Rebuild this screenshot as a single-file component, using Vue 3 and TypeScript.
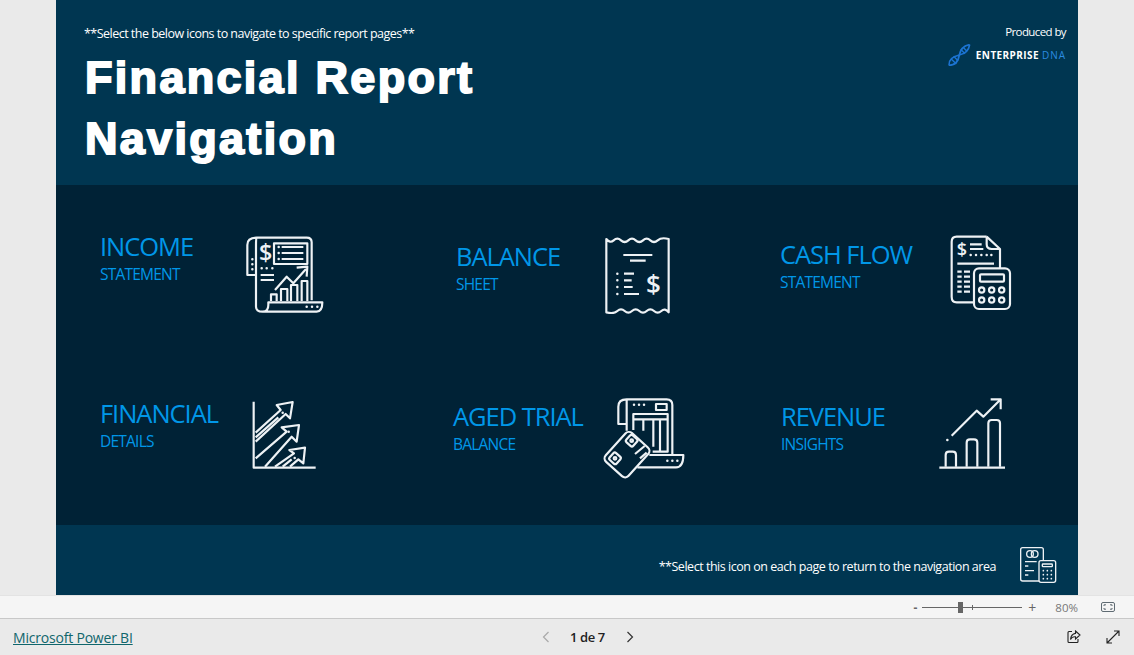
<script setup lang="ts">
const dollarFont = 'Open Sans'
</script>

<template>
  <div class="viewer">
    <div class="stage">
      <div class="report">
        <header class="report-header">
          <div class="intro">
            <p class="hint">**Select the below icons to navigate to specific report pages**</p>
            <h1 class="title">Financial Report<br />Navigation</h1>
          </div>
          <div class="producer">
            <span class="produced">Produced by</span>
            <div class="brand">
              <svg class="dna" viewBox="72 102 72 66" width="24" height="22" fill="none" stroke="#1c74d2">
                <path d="M78 166 Q104 166 109 135 Q114 108 140 104" stroke-width="5" />
                <path d="M78 166 Q76 142 109 135 Q136 130 140 104" stroke-width="5" />
                <path d="M84 146 L100 162 M92 139 L105 152 M113 118 L126 131 M120 112 L132 124" stroke-width="4" />
              </svg>
              <span class="brand-name">ENTERPRISE</span>
              <span class="brand-dna">DNA</span>
            </div>
          </div>
        </header>

        <nav class="tiles">
          <a class="tile tile-income">
            <div class="tile-text">
              <div class="tile-title">INCOME</div>
              <div class="tile-sub">STATEMENT</div>
            </div>
            <svg class="icon" viewBox="465 30 240 240" width="80" height="80">
              <path d="M500 38 H650 Q665 38 665 52 V226 M500 38 Q472 38 472 60 V150 H498 M500 38 Q498 40 498 60 V245 Q498 260 518 260 H680 Q697 260 697 232 H535 V240 Q535 260 518 260" />
              <rect x="552" y="55" width="100" height="62" />
              <path d="M575 66 H640 M575 84 H640 M575 102 H640 M512 150 H552 M512 165 H552" />
              <path class="dots" d="M566 66 H566.1 M566 84 H566.1 M566 102 H566.1 M487 103 H487.1 M487 118 H487.1 M487 133 H487.1 M515 130 H515.1 M530 130 H530.1 M547 130 H547.1 M650 245 H650.1 M666 245 H666.1 M682 245 H682.1" />
              <text class="dollar" x="527" y="109" font-size="70" :font-family="dollarFont">$</text>
              <path d="M555 195 L590 155 L610 175 L648 132 M620 128 L652 125 L650 155" />
              <path d="M543 228 V208 H560 V228 M573 228 V192 H592 V228 M603 228 V180 H622 V228 M635 228 V168 H652 V228" />
            </svg>
          </a>

          <a class="tile tile-balance">
            <div class="tile-text">
              <div class="tile-title">BALANCE</div>
              <div class="tile-sub">SHEET</div>
            </div>
            <svg class="icon" viewBox="489 33 204 234" width="68" height="78">
              <path d="M499 42 Q510 56 521 46 T543 46 T565 46 T587 46 T609 46 T631 46 T653 46 T686 42 V262 Q675 248 664 258 T642 258 T620 258 T598 258 T576 258 T554 258 T532 258 T499 262 Z" />
              <path d="M550 90 H637 M570 107 H617 M552 146 H582 M552 166 H575 M552 186 H578 M552 207 H597" />
              <path class="dots" d="M532 146 H532.1 M532 166 H532.1 M532 186 H532.1 M532 207 H532.1" />
              <text class="dollar" x="640" y="205" font-size="78" :font-family="dollarFont">$</text>
            </svg>
          </a>

          <a class="tile tile-cash">
            <div class="tile-text">
              <div class="tile-title">CASH FLOW</div>
              <div class="tile-sub">STATEMENT</div>
            </div>
            <svg class="icon" viewBox="540 27 186 231" width="62" height="77">
              <path d="M650 35 H560 Q545 35 545 50 V215 Q545 232 560 232 H612 M650 35 L690 72 V130 M650 35 V58 Q650 72 665 72 H690" />
              <text class="dollar" x="576" y="93" font-size="54" :font-family="dollarFont">$</text>
              <path d="M600 58 H635 M600 72 H640 M562 116 H672" />
              <path class="dots" d="M602 90 H602.1 M618 90 H618.1 M634 90 H634.1 M650 90 H650.1 M664 90 H664.1" />
              <path d="M562 140 H575 M582 140 H600 M562 155 H575 M582 155 H600 M562 170 H575 M582 170 H600 M562 185 H575 M582 185 H600 M562 200 H575 M582 200 H600" />
              <rect x="612" y="130" width="108" height="122" rx="15" />
              <rect x="630" y="148" width="72" height="22" rx="3" />
              <circle cx="635" cy="195" r="8" />
              <circle cx="665" cy="195" r="8" />
              <circle cx="695" cy="195" r="8" />
              <circle cx="635" cy="225" r="8" />
              <circle cx="665" cy="225" r="8" />
              <circle cx="695" cy="225" r="8" />
            </svg>
          </a>

          <a class="tile tile-details">
            <div class="tile-text">
              <div class="tile-title">FINANCIAL</div>
              <div class="tile-sub">DETAILS</div>
            </div>
            <svg class="icon" viewBox="486 30 198 210" width="66" height="70">
              <path d="M491 35 V233 H677" />
              <path d="M497 128 L572 60 L560 45 L608 36 L600 85 L587 72 L497 155 M497 142 L565 82" />
              <path d="M497 205 L590 125 L575 112 L627 105 L620 155 L605 140 L525 230" />
              <path d="M555 230 L612 190 L598 180 L645 173 L640 220 L625 208 L600 230 M578 230 L605 208" />
              <path class="dots" d="M578 68 H578.1 M596 125 H596.1 M614 204 H614.1" />
            </svg>
          </a>

          <a class="tile tile-trial">
            <div class="tile-text">
              <div class="tile-title">AGED TRIAL</div>
              <div class="tile-sub">BALANCE</div>
            </div>
            <svg class="icon" viewBox="489 21 246 246" width="82" height="82">
              <path d="M560 28 H680 Q697 28 697 45 V192 M560 28 Q535 28 535 50 V102 H560 M560 28 Q560 40 560 60 V122" />
              <path d="M580 120 V72 H683 V185 H638 M580 88 H683 M610 88 V122 M640 88 V170 M660 88 V185" />
              <rect x="648" y="42" width="32" height="18" />
              <path class="dots" d="M582 44 H582.1 M597 44 H597.1 M612 44 H612.1 M682 212 H682.1 M697 212 H697.1 M712 212 H712.1" />
              <path d="M628 195 H730 Q730 232 708 232 H592" />
              <rect x="-58" y="-46" width="116" height="92" rx="14" transform="translate(561 194) rotate(-48)" />
              <rect x="-14" y="-14" width="28" height="28" rx="6" transform="translate(575 152) rotate(-48)" />
              <rect x="-14" y="-14" width="28" height="28" rx="6" transform="translate(525 205) rotate(-48)" />
              <circle cx="575" cy="152" r="4" />
              <circle cx="525" cy="205" r="4" />
              <path d="M585 192 L614 168 M600 205 L620 188" />
            </svg>
          </a>

          <a class="tile tile-revenue">
            <div class="tile-text">
              <div class="tile-title">REVENUE</div>
              <div class="tile-sub">INSIGHTS</div>
            </div>
            <svg class="icon" viewBox="504 24 204 213" width="68" height="71">
              <path d="M508 233 H705" />
              <path d="M527 230 V195 Q527 185 537 185 H548 Q558 185 558 195 V230 M590 230 V158 Q590 148 600 148 H612 Q622 148 622 158 V230 M655 230 V100 Q655 90 665 90 H680 Q690 90 690 100 V230" />
              <path d="M545 137 L620 62 L640 80 L690 30 M662 28 H692 V58" />
              <path class="dots" d="M532 150 H532.1" />
            </svg>
          </a>
        </nav>

        <footer class="report-footer">
          <span class="return-note">**Select this icon on each page to return to the navigation area</span>
          <svg class="icon home-icon" viewBox="1137 78 114 114" width="38" height="38">
            <path d="M1197 183 H1148 Q1142 183 1142 177 V89 Q1142 83 1148 83 H1204 Q1210 83 1210 89 V122" />
            <circle cx="1170" cy="102" r="10" />
            <circle cx="1184" cy="102" r="10" />
            <path d="M1155 125 H1190 M1155 138 H1165 M1155 152 H1182 M1155 165 H1165" />
            <rect x="1197" y="122" width="50" height="65" rx="6" />
            <rect x="1207" y="132" width="30" height="8" rx="2" />
            <path class="dots" d="M1210 152 H1210.1 M1222 152 H1222.1 M1234 152 H1234.1 M1210 164 H1210.1 M1222 164 H1222.1 M1234 164 H1234.1 M1210 176 H1210.1 M1222 176 H1222.1 M1234 176 H1234.1" />
          </svg>
        </footer>
      </div>
    </div>

    <div class="zoom-bar">
      <span class="zoom-minus">-</span>
      <div class="zoom-track">
        <span class="zoom-tick"></span>
        <span class="zoom-thumb"></span>
      </div>
      <span class="zoom-plus">+</span>
      <span class="zoom-value">80%</span>
      <svg class="fit-icon" viewBox="0 0 16 12" width="16" height="12" fill="none" stroke="#5f6b73">
        <rect x="1.5" y="1.5" width="13" height="9" rx="1.5" />
        <path d="M4 5 V3.8 H6 M12 5 V3.8 H10 M4 7 V8.2 H6 M12 7 V8.2 H10" />
      </svg>
    </div>

    <div class="bottom-bar">
      <a class="pbi-link">Microsoft Power BI</a>
      <div class="pager">
        <svg viewBox="0 0 8 12" width="8" height="12" fill="none" stroke="#a9a9a9" stroke-width="1.2">
          <path d="M6.5 1 L1.5 6 L6.5 11" />
        </svg>
        <span class="page-label">1 de 7</span>
        <svg viewBox="0 0 8 12" width="8" height="12" fill="none" stroke="#333" stroke-width="1.2">
          <path d="M1.5 1 L6.5 6 L1.5 11" />
        </svg>
      </div>
      <div class="bar-actions">
        <svg viewBox="0 0 14 14" width="14" height="14" fill="none" stroke="#222" stroke-width="1.1">
          <path d="M5 1.5 H2 Q1 1.5 1 2.5 V11.5 Q1 12.5 2 12.5 H10 Q11 12.5 11 11.5 V9" />
          <path d="M8.5 1 L13 5 L8.5 9 V6.8 Q5 6.5 3.5 9.5 Q4 4 8.5 3.4 Z" />
        </svg>
        <svg viewBox="0 0 14 14" width="14" height="14" fill="none" stroke="#222" stroke-width="1.1">
          <path d="M1 13 L13 1 M8 1 H13 V6 M1 8 V13 H6" />
        </svg>
      </div>
    </div>
  </div>
</template>

<style scoped>
.viewer {
  width: 1134px;
  height: 655px;
  display: flex;
  flex-direction: column;
  background: #eaeaea;
  font-family: "Open Sans", "Noto Sans", sans-serif;
  overflow: hidden;
}

.stage {
  height: 595px;
  display: flex;
  justify-content: center;
}

.report {
  width: 1022px;
  display: flex;
  flex-direction: column;
}

.report-header {
  height: 185px;
  box-sizing: border-box;
  background: #003651;
  display: flex;
  justify-content: space-between;
  padding: 0 12px 0 28px;
}

.hint {
  margin: 25px 0 0;
  color: #fff;
  font-size: 12.5px;
  font-weight: 500;
  line-height: 18px;
  letter-spacing: -0.52px;
}

.title {
  margin: 4px 0 0 1px;
  color: #fff;
  font-family: "Liberation Sans", Arial, sans-serif;
  font-size: 45px;
  font-weight: 700;
  line-height: 61px;
  letter-spacing: 2.3px;
  -webkit-text-stroke: 1.9px #fff;
}

.producer {
  display: flex;
  flex-direction: column;
  align-items: flex-end;
  padding-top: 23px;
}

.produced {
  color: #fff;
  font-size: 11.5px;
  font-weight: 500;
  line-height: 18px;
  letter-spacing: -0.6px;
}

.brand {
  display: flex;
  align-items: center;
  margin-top: 3px;
  font-size: 10px;
}

.dna {
  margin-right: 5px;
}

.brand-name {
  color: #fff;
  font-weight: 700;
  letter-spacing: 0.4px;
}

.brand-dna {
  color: #2b8be0;
  margin-left: 3px;
  letter-spacing: 1px;
}

.tiles {
  height: 340px;
  box-sizing: border-box;
  background: #002236;
  padding: 47px 0 0 44px;
  display: grid;
  grid-template-columns: 353px 327px 1fr;
  grid-template-rows: 164px 1fr;
}

.tile {
  display: flex;
  align-items: flex-start;
}

.tile-title {
  color: #0097e8;
  font-size: 25.5px;
  font-weight: 400;
  line-height: 29px;
  letter-spacing: -1.05px;
  white-space: nowrap;
}

.tile-sub {
  color: #0097e8;
  font-size: 15.5px;
  font-weight: 400;
  line-height: 27px;
  letter-spacing: -0.78px;
  white-space: nowrap;
}

.tile-income .tile-text { width: 145px; }
.tile-income .icon { margin-top: 3px; }

.tile-balance .tile-text { width: 147px; padding: 10px 0 0 3px; }
.tile-balance .icon { margin-top: 4px; }

.tile-cash .tile-text { width: 170px; padding-top: 8px; }
.tile-cash .icon { margin-top: 2px; }

.tile-details .tile-text { width: 152px; padding-top: 3px; }
.tile-details .icon { margin-top: 4px; }

.tile-trial .tile-text { width: 150px; padding-top: 6px; }
.tile-trial .icon { margin-top: 1px; }

.tile-revenue .tile-text { width: 157px; padding: 6px 0 0 1px; }
.tile-revenue .icon { margin-top: 2px; }

.icon {
  flex: none;
  fill: none;
  stroke: #eef2f5;
  stroke-width: 6.5;
  stroke-linejoin: round;
}

.icon .dots {
  stroke-width: 7.5;
  stroke-linecap: round;
}

.dollar {
  fill: #eef2f5;
  stroke: none;
  font-weight: 600;
  text-anchor: middle;
}

.report-footer {
  height: 70px;
  background: #003651;
  display: flex;
  align-items: center;
  justify-content: flex-end;
  padding-right: 21px;
}

.return-note {
  color: #fff;
  font-size: 12.5px;
  font-weight: 500;
  letter-spacing: -0.47px;
  margin-right: 23px;
  margin-top: 13px;
}

.home-icon {
  stroke-width: 4;
  margin-top: 9px;
}

.home-icon .dots {
  stroke-width: 5;
}

.zoom-bar {
  height: 24px;
  box-sizing: border-box;
  background: #f5f5f5;
  border-top: 1px solid #e3e3e3;
  border-bottom: 1px solid #c8c8c8;
  display: flex;
  align-items: center;
  justify-content: flex-end;
  padding-right: 18px;
  color: #666;
  font-size: 12px;
}

.zoom-minus {
  width: 8px;
  font-weight: 700;
  margin-right: 3px;
  text-align: center;
}

.zoom-track {
  position: relative;
  width: 100px;
  height: 1px;
  background: #666;
}

.zoom-tick {
  position: absolute;
  left: 50px;
  top: -2px;
  width: 1px;
  height: 5px;
  background: #666;
}

.zoom-thumb {
  position: absolute;
  left: 36px;
  top: -5px;
  width: 5px;
  height: 11px;
  background: #666;
}

.zoom-plus {
  width: 10px;
  margin-left: 5px;
  font-size: 14px;
  text-align: center;
}

.zoom-value {
  margin-left: 18px;
  color: #777;
  font-size: 11.5px;
}

.fit-icon {
  margin-left: 22px;
}

.bottom-bar {
  height: 36px;
  display: flex;
  align-items: center;
  justify-content: space-between;
  padding: 0 13px;
  position: relative;
}

.pbi-link {
  color: #10666c;
  font-size: 14px;
  text-decoration: underline;
  letter-spacing: -0.2px;
}

.pager {
  position: absolute;
  left: 542px;
  display: flex;
  align-items: center;
}

.page-label {
  margin: 0 21px 0 20px;
  color: #222;
  font-size: 13px;
  font-weight: 600;
  letter-spacing: -0.4px;
}

.bar-actions {
  display: flex;
  gap: 25px;
  padding-right: 1px;
}
</style>
